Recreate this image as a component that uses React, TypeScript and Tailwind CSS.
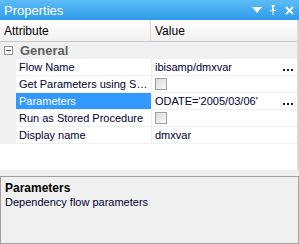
import React from "react";

const rows: { name: string; value?: string; check?: boolean; dots?: boolean; selected?: boolean }[] = [
  { name: "Flow Name", value: "ibisamp/dmxvar", dots: true },
  { name: "Get Parameters using S…", check: true },
  { name: "Parameters", value: "ODATE='2005/03/06'", dots: true, selected: true },
  { name: "Run as Stored Procedure", check: true },
  { name: "Display name", value: "dmxvar" },
];

function Check() {
  return <div className="w-[12px] h-[12px] border border-[#a0a0a0] bg-gradient-to-br from-[#dcdcdc] to-[#f8f8f8]" />;
}

function Dots() {
  return (
    <div className="flex gap-[2px] self-end mb-[4px] mr-[4px]">
      <div className="w-[2px] h-[2px] bg-[#1a1a40]" />
      <div className="w-[2px] h-[2px] bg-[#1a1a40]" />
      <div className="w-[2px] h-[2px] bg-[#1a1a40]" />
    </div>
  );
}

export default function App() {
  return (
    <div className="w-[299px] h-[244px] bg-[#f0f0f0] flex flex-col overflow-hidden text-[11px] leading-none" style={{ fontFamily: "Tahoma, 'Liberation Sans', Arial, sans-serif" }}>
      <div className="h-[20px] shrink-0 bg-gradient-to-b from-[#5cbcf6] to-[#2b9bea] flex items-center pl-[4px] pr-[4px] text-white text-[13px]">
        <span className="flex-1">Properties</span>
        <svg width="10" height="8" viewBox="0 0 10 8" className="mr-[7px]"><path d="M0 1h10L5 7z" fill="white" /></svg>
        <svg width="8" height="10" viewBox="0 0 8 10" className="mr-[8px]"><path d="M2 0h4v1H5v4h2v1H4.5v4h-1V6H1V5h2V1H2z" fill="white" /></svg>
        <svg width="9" height="9" viewBox="0 0 9 9" className="mr-[1px]"><path d="M1 1l7 7M8 1L1 8" stroke="white" strokeWidth="1.8" /></svg>
      </div>
      <div className="h-[150px] shrink-0 bg-white flex flex-col border-r-2 border-[#d8d8d8]">
        <div className="h-[22px] shrink-0 flex items-center bg-gradient-to-b from-white to-[#f0f0f0] border-b border-[#c8c8c8] text-black text-[12px]">
          <div className="w-[151px] pl-[4px] border-r border-[#d8d8d8] h-full flex items-center">Attribute</div>
          <div className="pl-[4px]">Value</div>
        </div>
        <div className="h-[17px] shrink-0 flex items-center bg-[#f0f0f0] pl-[4px] text-[13px] font-bold text-[#606060]">
          <div className="w-[9px] h-[9px] border border-[#909090] bg-white flex items-center justify-center mr-[7px]">
            <div className="w-[5px] h-[1px] bg-[#505050]" />
          </div>
          General
        </div>
        {rows.map((r) => (
          <div key={r.name} className="h-[17px] shrink-0 flex">
            <div className="w-[16px] bg-[#f0f0f0]" />
            <div className={`w-[135px] pl-[3px] flex items-center border-b border-[#f0f0f0] whitespace-nowrap overflow-hidden ${r.selected ? "bg-[#3399ff] text-white" : "text-[#000033]"}`}>{r.name}</div>
            <div className="flex-1 flex items-center pl-[3px] border-b border-l border-[#f0f0f0] text-[#000033] whitespace-nowrap">
              {r.check ? <Check /> : <span className="flex-1">{r.value}</span>}
              {r.dots && <Dots />}
            </div>
          </div>
        ))}
        <div className="flex-1" />
      </div>
      <div className="h-[6px] shrink-0" />
      <div className="flex-1 border border-[#a0a0a0] bg-[#f0f0f0] pl-[4px] pt-[5px]">
        <div className="font-bold text-black text-[12px] mb-[3px]">Parameters</div>
        <div className="text-[#000033]">Dependency flow parameters</div>
      </div>
    </div>
  );
}
